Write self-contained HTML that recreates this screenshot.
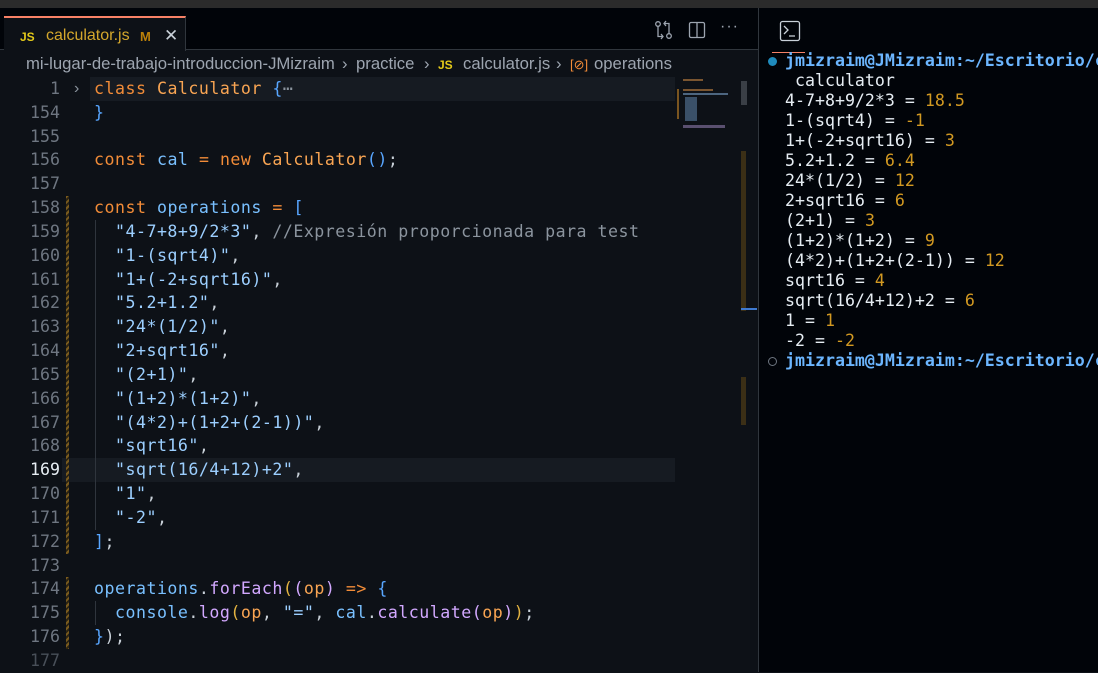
<!DOCTYPE html>
<html><head><meta charset="utf-8"><style>
*{margin:0;padding:0;box-sizing:border-box}
body{width:1098px;height:672px;overflow:hidden;background:#0d1117;position:relative;font-family:"Liberation Sans",sans-serif}
.top{position:absolute;left:0;top:0;width:1098px;height:8px;background:#2b2b2b}
.tabbar{position:absolute;left:0;top:8px;width:758px;height:42px;background:#010409;border-bottom:1px solid #30363d}
.tab{position:absolute;left:4px;top:8px;width:182px;height:43px;background:#0d1117;border-top:2px solid #f78166;border-right:1px solid #30363d}
.tab .js{position:absolute;left:16px;top:12px;color:#e3c91a;font-weight:bold;font-size:12px}
.tab .nm{position:absolute;left:42px;top:9px;color:#d4a72c;font-size:16px}
.tab .m{position:absolute;left:136px;top:11px;color:#bb8009;font-weight:bold;font-size:13px}
.tab .x{position:absolute;left:160px;top:8px;color:#c9d1d9;font-size:17px}
.bc{position:absolute;left:0;top:51px;width:757px;height:26px;background:#0d1117;color:#9da5b0;font-size:16.7px;white-space:nowrap}
.bc span{position:absolute;top:3px}
.editor{position:absolute;left:0;top:77px;width:757px;height:595px}
.ln{position:absolute;left:0;width:60px;text-align:right;color:#6e7681;font-family:"DejaVu Sans Mono","Liberation Mono",monospace;font-size:16.6px;line-height:23.83px}
.cd{position:absolute;left:94px;white-space:pre;font-family:"DejaVu Sans Mono","Liberation Mono",monospace;font-size:16.6px;line-height:23.83px;letter-spacing:0.5px;color:#c9d1d9}
.k{color:#f28c38}.c{color:#f9a553}.v{color:#79c0ff}.s{color:#9ccfff}.cm{color:#8b949e}.f{color:#d2a8ff}.y{color:#e3b341}.b{color:#58a6ff}
.gut{position:absolute;left:66px;width:3px;background:repeating-linear-gradient(135deg,#7a5b1e 0 2px,#2b2312 2px 4px)}
.guide{position:absolute;left:95px;width:1px;background:#2f353d}
.term{position:absolute;left:758px;top:8px;width:340px;height:664px;background:#010409;border-left:1px solid #30363d}
.tl{position:absolute;left:26px;white-space:pre;font-family:"DejaVu Sans Mono","Liberation Mono",monospace;font-size:16.6px;line-height:20px;color:#e6edf3}
.n{color:#d29922}.p{color:#6cb6ff;font-weight:bold}
</style></head><body>
<div class="top"></div>
<div class="tabbar">
 <div class="tab"><span class="js">JS</span><span class="nm">calculator.js</span><span class="m">M</span><span class="x">✕</span></div>
 <svg style="position:absolute;left:654px;top:12px" width="20" height="20" viewBox="0 0 20 20" fill="none" stroke="#9da5b0" stroke-width="1.3"><circle cx="4" cy="4" r="2.3"/><circle cx="15" cy="16" r="2.3"/><path d="M4 6.5v10h5M7 14l2 2.5-2 2.5M15 13.5v-10H10M12 1l-2 2.5 2 2.5"/></svg>
 <svg style="position:absolute;left:688px;top:13px" width="18" height="18" viewBox="0 0 18 18" fill="none" stroke="#9da5b0" stroke-width="1.3"><rect x="1.5" y="1.5" width="15" height="15" rx="1.5"/><path d="M9 1.5v15"/></svg>
 <span style="position:absolute;left:720px;top:10px;color:#9da5b0;font-size:16px;letter-spacing:1px">···</span>
</div>
<div class="bc">
 <span style="left:26px">mi-lugar-de-trabajo-introduccion-JMizraim</span>
 <span style="left:342px">›</span>
 <span style="left:356px">practice</span>
 <span style="left:424px">›</span>
 <span style="left:438px;color:#e3c91a;font-weight:bold;font-size:12px;top:7px">JS</span>
 <span style="left:463px">calculator.js</span>
 <span style="left:556px">›</span>
 <span style="left:570px;color:#f28c38;font-size:13px;top:6px">[⊘]</span>
 <span style="left:594px">operations</span>
</div>
<div class="editor">
 <div style="position:absolute;left:90px;top:0;width:585px;height:24px;background:#161b22"></div>
 <div style="position:absolute;left:62px;top:381px;width:613px;height:24px;background:#161b22"></div>
 <div class="gut" style="top:119px;height:358px"></div>
 <div class="gut" style="top:500px;height:72px"></div>
 <div class="guide" style="top:143px;height:310px"></div>
 <div class="guide" style="top:524px;height:24px"></div>
 <span style="position:absolute;left:74px;top:0;color:#8b949e;font-size:16px;line-height:24px">›</span>
 <div class="ln" style="top:0">1<br>154<br>155<br>156<br>157<br>158<br>159<br>160<br>161<br>162<br>163<br>164<br>165<br>166<br>167<br>168<br><span style="color:#e6edf3">169</span><br>170<br>171<br>172<br>173<br>174<br>175<br>176<br><span style="color:#484f58">177</span></div>
 <div class="cd" style="top:0"><span class="k">class</span> <span class="c">Calculator</span> <span class="b">{</span><span class="cm">⋯</span>
<span class="b">}</span>

<span class="k">const</span> <span class="v">cal</span> <span class="k">=</span> <span class="k">new</span> <span class="c">Calculator</span><span class="b">()</span>;

<span class="k">const</span> <span class="v">operations</span> <span class="k">=</span> <span class="b">[</span>
  <span class="s">"4-7+8+9/2*3"</span>, <span class="cm">//Expresión proporcionada para test</span>
  <span class="s">"1-(sqrt4)"</span>,
  <span class="s">"1+(-2+sqrt16)"</span>,
  <span class="s">"5.2+1.2"</span>,
  <span class="s">"24*(1/2)"</span>,
  <span class="s">"2+sqrt16"</span>,
  <span class="s">"(2+1)"</span>,
  <span class="s">"(1+2)*(1+2)"</span>,
  <span class="s">"(4*2)+(1+2+(2-1))"</span>,
  <span class="s">"sqrt16"</span>,
  <span class="s">"sqrt(16/4+12)+2"</span>,
  <span class="s">"1"</span>,
  <span class="s">"-2"</span>,
<span class="b">]</span>;

<span class="v">operations</span>.<span class="f">forEach</span><span class="y">(</span><span class="f">(</span><span class="c">op</span><span class="f">)</span> <span class="k">=&gt;</span> <span class="b">{</span>
  <span class="v">console</span>.<span class="f">log</span><span class="y">(</span><span class="c">op</span>, <span class="s">"="</span>, <span class="v">cal</span>.<span class="f">calculate</span><span class="f">(</span><span class="c">op</span><span class="f">)</span><span class="y">)</span>;
<span class="b">}</span>);</div>
 <!-- minimap -->
 <div style="position:absolute;left:675px;top:0;width:62px;height:595px;background:#0d1117"></div>
 <div style="position:absolute;left:683px;top:2px;width:20px;height:2px;background:#7a5530"></div>
 <div style="position:absolute;left:683px;top:12px;width:30px;height:2px;background:#7a5530"></div>
 <div style="position:absolute;left:683px;top:16px;width:45px;height:2px;background:#4d6680"></div>
 <div style="position:absolute;left:685px;top:20px;width:12px;height:24px;background:#3a5068"></div>
 <div style="position:absolute;left:683px;top:48px;width:42px;height:3px;background:#5a5070"></div>
 <div style="position:absolute;left:677px;top:12px;width:2px;height:30px;background:#7a5520"></div>
 <div style="position:absolute;left:741px;top:4px;width:6px;height:24px;background:#3a3f46"></div>
 <div style="position:absolute;left:741px;top:74px;width:5px;height:160px;background:#3b2f16"></div>
 <div style="position:absolute;left:741px;top:300px;width:5px;height:48px;background:#3b2f16"></div>
 <div style="position:absolute;left:741px;top:231px;width:16px;height:2px;background:#3f7ad0"></div>
</div>
<div class="term">
 <svg style="position:absolute;left:20px;top:12px" width="22" height="22" viewBox="0 0 22 22" fill="none" stroke="#c9d1d9" stroke-width="1.3"><rect x="1.5" y="1.5" width="19" height="19" rx="2"/><path d="M5 6l4 4-4 4M10 16h6"/></svg>
 <div style="position:absolute;left:13px;top:44px;width:33px;height:1px;background:#f78166"></div>
 <div style="position:absolute;left:9px;top:49px;width:9px;height:9px;border-radius:50%;background:#1f8bbd"></div>
 <div style="position:absolute;left:9px;top:349px;width:9px;height:9px;border-radius:50%;border:1.5px solid #6e7681"></div>
 <div class="tl" style="top:43px"><span class="p">jmizraim@JMizraim:~/Escritorio/c</span>
 calculator
4-7+8+9/2*3 = <span class="n">18.5</span>
1-(sqrt4) = <span class="n">-1</span>
1+(-2+sqrt16) = <span class="n">3</span>
5.2+1.2 = <span class="n">6.4</span>
24*(1/2) = <span class="n">12</span>
2+sqrt16 = <span class="n">6</span>
(2+1) = <span class="n">3</span>
(1+2)*(1+2) = <span class="n">9</span>
(4*2)+(1+2+(2-1)) = <span class="n">12</span>
sqrt16 = <span class="n">4</span>
sqrt(16/4+12)+2 = <span class="n">6</span>
1 = <span class="n">1</span>
-2 = <span class="n">-2</span>
<span class="p">jmizraim@JMizraim:~/Escritorio/c</span></div>
</div>
</body></html>
